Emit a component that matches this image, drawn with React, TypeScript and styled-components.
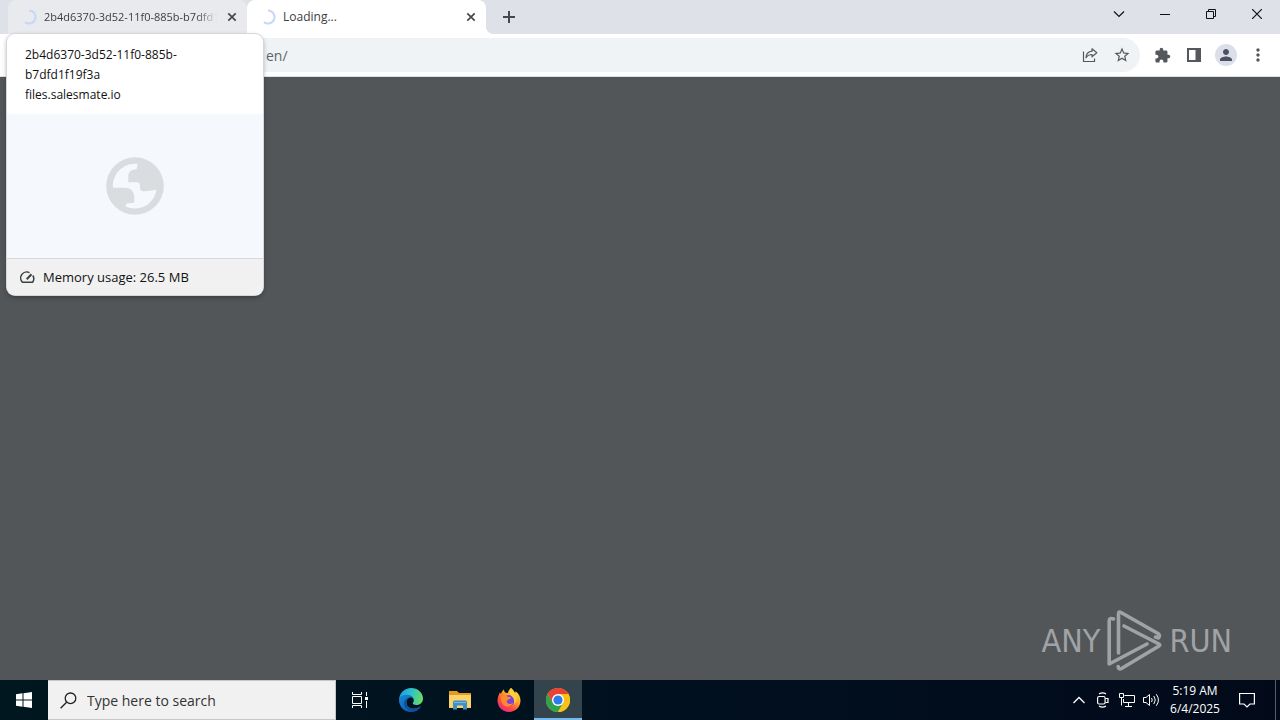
import React from "react";
import styled, { createGlobalStyle } from "styled-components";
import { MdExtension, MdStarBorder, MdPerson, MdMoreVert } from "react-icons/md";

const GlobalStyle = createGlobalStyle`
  * { box-sizing: border-box; }
  body { margin: 0; font-family: "Open Sans", "Noto Sans", sans-serif; font-size: 12px; color: #202124; }
  button { font: inherit; color: inherit; border: 0; padding: 0; background: none; }
`;

const Desktop = styled.div`
  position: relative;
  display: flex;
  flex-direction: column;
  min-height: 100vh;
  background: #525659;
`;

const TabStrip = styled.header`
  display: flex;
  height: 34px;
  padding-left: 8px;
  background: #dee1e8;
`;

const TabItem = styled.div<{ $active?: boolean }>`
  position: relative;
  display: flex;
  align-items: center;
  width: 239px;
  padding: 0 7px 0 13px;
  gap: 7px;
  border-radius: 8px 8px 0 0;
  background: ${(p) => (p.$active ? "#ffffff" : "#e8eaed")};
  &::after {
    content: "";
    display: ${(p) => (p.$active ? "block" : "none")};
    position: absolute;
    left: 100%;
    bottom: 0;
    width: 8px;
    height: 8px;
    background: radial-gradient(circle at 100% 0, transparent 8px, #ffffff 8px);
  }
`;

const TabTitle = styled.span<{ $fade?: boolean }>`
  flex: 1;
  min-width: 0;
  overflow: hidden;
  white-space: nowrap;
  line-height: 16px;
  font-size: ${(p) => (p.$fade ? 11 : 12)}px;
  color: #3c4043;
  mask-image: ${(p) => (p.$fade ? "linear-gradient(to right, #000 88%, transparent)" : "none")};
`;

const IconButton = styled.button<{ $size?: number }>`
  display: grid;
  place-items: center;
  flex: none;
  width: ${(p) => p.$size ?? 16}px;
  height: ${(p) => p.$size ?? 16}px;
  color: #45494d;
`;

const NewTab = styled(IconButton)`
  align-self: center;
  margin-left: 9px;
`;

const WindowControls = styled.div`
  display: flex;
  margin-left: auto;
`;

const WindowButton = styled.button`
  display: grid;
  place-items: center;
  width: 46px;
  height: 28px;
  color: #111111;
`;

const Toolbar = styled.div`
  display: flex;
  align-items: center;
  height: 43px;
  padding: 0 6px 0 112px;
  gap: 6px;
  background: #ffffff;
  border-bottom: 1px solid #dfe1e3;
`;

const AddressBar = styled.form`
  display: flex;
  align-items: center;
  flex: 1;
  height: 34px;
  padding: 0 2px 0 154px;
  border-radius: 17px;
  background: #f0f3f5;
`;

const AddressInput = styled.input`
  flex: 1;
  min-width: 0;
  padding: 0;
  border: 0;
  background: none;
  outline: none;
  font: 14px "Open Sans", "Noto Sans", sans-serif;
  color: #5f6368;
`;

const ToolButton = styled(IconButton)`
  width: 32px;
  height: 32px;
  color: #54585d;
`;

const ToolGroup = styled.nav`
  display: flex;
`;

const Avatar = styled.span`
  display: grid;
  place-items: center;
  width: 22px;
  height: 22px;
  border-radius: 50%;
  background: #dcdfe9;
  color: #4c5265;
`;

const Page = styled.main`
  display: flex;
  flex: 1;
  align-items: flex-end;
  justify-content: flex-end;
  padding: 0 48px 8px;
`;

const Watermark = styled.div`
  display: flex;
  align-items: center;
  gap: 7px;
  height: 62px;
  color: #a0a3a5;
  font: 32px "DejaVu Sans Condensed", sans-serif;
`;

const HoverCard = styled.section`
  position: absolute;
  top: 34px;
  left: 7px;
  width: 256px;
  overflow: hidden;
  border-radius: 8px;
  background: #ffffff;
  box-shadow: 0 0 0 1px #d5d7da, 0 2px 5px rgba(0, 0, 0, 0.35);
  color: #111111;
`;

const CardText = styled.div`
  height: 80px;
  padding: 11px 18px 0;
  line-height: 20px;
  p { margin: 0; }
`;

const CardPreview = styled.div`
  display: grid;
  place-items: center;
  height: 144px;
  background: #f5f9fd;
`;

const CardFooter = styled.footer`
  display: flex;
  align-items: center;
  gap: 8px;
  height: 37px;
  padding-left: 13px;
  border-top: 1px solid #d6d9dc;
  background: #f1f1f1;
  font-size: 13px;
`;

const Taskbar = styled.footer`
  display: flex;
  height: 40px;
  background: linear-gradient(to right, #00171f, #010f1e 60%, #020a1a);
  color: #ffffff;
`;

const TaskButton = styled.button<{ $active?: boolean }>`
  display: grid;
  place-items: center;
  width: 48px;
  height: 40px;
  background: ${(p) => (p.$active ? "#34444d" : "none")};
  box-shadow: ${(p) => (p.$active ? "inset 0 -2px #76b9ed" : "none")};
`;

const SearchBox = styled.label`
  display: flex;
  align-items: center;
  gap: 10px;
  width: 288px;
  padding-left: 12px;
  border: 1px solid #c4c6c7;
  border-left-width: 0;
  background: #f1f1f1;
  color: #222222;
`;

const SearchInput = styled.input`
  flex: 1;
  min-width: 0;
  padding: 0;
  border: 0;
  outline: none;
  background: none;
  font: 14px "Open Sans", "Noto Sans", sans-serif;
  &::placeholder { color: #333333; opacity: 1; }
`;

const Pinned = styled.div`
  display: flex;
  gap: 1px;
  margin-left: 3px;
`;

const Tray = styled.div`
  display: flex;
  margin-left: auto;
`;

const TrayButton = styled(TaskButton)`
  width: 24px;
`;

const NotificationButton = styled(TaskButton)`
  width: 40px;
  margin-right: 8px;
`;

const Clock = styled.time`
  width: 64px;
  padding-top: 2px;
  text-align: center;
  line-height: 18px;
`;

const ShowDesktop = styled.button`
  width: 5px;
  border-left: 1px solid #56606a;
`;

const Spinner = () => (
  <svg width="16" height="16" viewBox="0 0 16 16" fill="none">
    <path d="M8 1.500a6.500 6.500 0 1 1-4 11.600" stroke="#c9d5fb" strokeWidth="2" />
  </svg>
);

const Cross = () => (
  <svg width="10" height="10" viewBox="0 0 10 10" fill="none" stroke="currentColor" strokeWidth="1.700">
    <path d="M1.300 1.300l7.400 7.400M8.700 1.300L1.300 8.700" />
  </svg>
);

const Globe = () => (
  <svg width="58" height="58" viewBox="0 0 58 58">
    <circle cx="29" cy="29" r="28.800" fill="#dadde0" />
    <path
      fill="#f5f9fd"
      d="M31.500 6.800L30.700 12.300C27 12.500 25.500 13 24 14.700C22.600 16 22.300 17 22.300 19V25.300H30.500C33 25.300 34 26.500 34 28.500V31.500C34 33.500 36 34.300 39 34.300C43 34.200 46 33.500 50.500 32.800C48.500 44 40 51.500 29 51.500C25.500 51.500 22.500 50.700 19.500 49.300L20.500 46.500L28.300 45.700V39.700C28.300 34 24 30.700 18.300 30.700H7C6 17 17 5.500 31.500 6.800z"
    />
  </svg>
);

const RunMark = () => (
  <svg width="55" height="62" viewBox="0 0 55 62" fill="none" stroke="currentColor" strokeWidth="3.600" strokeLinejoin="round" strokeLinecap="round">
    <path d="M11.500 43V4q0-3 2.500-1.500L51 23.500q2.500 2 .5 4.500l-3-1" />
    <path d="M6.500 9Q2.200 7.500 2.200 11v43L40 34" />
    <path d="M17 16l35 18q1.500 1 0 2L14.500 58.500q-3 1.500-3.300-2" />
  </svg>
);

const EdgeLogo = () => (
  <svg width="24" height="24" viewBox="0 0 24 24">
    <defs>
      <linearGradient id="edgeTop" x1="0" y1=".3" x2="1" y2=".5">
        <stop offset="0" stopColor="#1b9de2" />
        <stop offset=".5" stopColor="#2fc3c8" />
        <stop offset="1" stopColor="#6bdb62" />
      </linearGradient>
      <linearGradient id="edgeLow" x1="0" y1="0" x2="1" y2="1">
        <stop offset="0" stopColor="#1787d8" />
        <stop offset="1" stopColor="#0b4fa0" />
      </linearGradient>
    </defs>
    <path fill="url(#edgeTop)" d="M0 11.500C.5 5 5.500 0 12 0c7 0 12 5 12 10.500 0 4-3 6.500-6.500 6.500-2.500 0-3.700-.8-3.700-1.700 0-.6 1-1.200 1-2.800C14.800 9.500 12 7.500 8.500 7.500 4 7.500 1 9.500 0 11.500z" />
    <path fill="url(#edgeLow)" d="M0 12c0-3 3.500-5.200 7.500-5.200 4.500 0 7.300 2.500 7.300 5.400 0-1.700-1.500-2.700-3-2.700C9 9.500 7.500 12 7.500 14.500c0 4 3.500 6 7.500 6 3 0 5-1 7-2.200C20 22 16.500 24 12 24 5 24 0 18.500 0 12z" />
    <path fill="#124f96" d="M9.500 9.800C8 11 7.500 12.800 7.500 14.500c0 4 3.500 6 7.500 6 3 0 5-1 7-2.200-1 2-3 3.800-5.500 4.900C10.500 24 5 20.500 5 15.500c0-3 2-5.200 4.500-5.700z" />
  </svg>
);

const FolderLogo = () => (
  <svg width="22" height="20" viewBox="0 0 22 20">
    <path fill="#e59a20" d="M0 1h8l2 2h12v5H0z" />
    <path fill="#fbd367" d="M0 5h22v13H0z" />
    <path fill="#3c8fc9" d="M4 19.500V12q0-1.500 1.500-1.500h11q1.500 0 1.500 1.500v7.500h-4V15.500H8v4z" />
    <path fill="#6fb9e6" d="M5 12h12v1H5z" />
  </svg>
);

const FirefoxLogo = () => (
  <svg width="24" height="24" viewBox="0 0 24 24">
    <defs>
      <linearGradient id="fox" x1=".9" y1="0" x2=".2" y2="1">
        <stop offset="0" stopColor="#fff04a" />
        <stop offset=".4" stopColor="#ffa52a" />
        <stop offset=".7" stopColor="#ff4b42" />
        <stop offset="1" stopColor="#e6228f" />
      </linearGradient>
    </defs>
    <path fill="url(#fox)" d="M14 0c2 1.500 3.200 3.500 3.800 5.200.6-.5.800-1.200.8-2C22 5.500 23.500 9 23.500 12.500 23.500 19 18.500 24 12 24S.5 19 .5 12.500C.5 9 2 6.500 3 4c.3 1 .5 1.500 1 2 .5-2 1.500-3.500 3-4.500 0 1.500.6 2.500 1.700 3.300L11 5c.2-2 1.500-4 3-5z" />
    <circle cx="12" cy="12.500" r="5.500" fill="#7a43db" />
    <path fill="#ff8a2a" d="M4 9c2-2 4.500-2 6.500-.5 1.500.8 3 .2 3.500 1.200-1 1.800-3.500 1.300-4.200 3.300C9.500 16 13 17 16 15c-1.500 3.800-7 5-10 1.500C4.500 14.500 3.500 11.500 4 9z" />
    <path fill="#ffcf3a" d="M14 0c2.500 2.500 5 5 5.500 10 .2 3-1 5-2.500 6.500 1-4-.5-7-2.500-8.500C12 6 12 2.500 14 0z" />
  </svg>
);

const ChromeLogo = () => (
  <svg width="24" height="24" viewBox="0 0 24 24">
    <circle cx="12" cy="12" r="12" fill="#fbc116" />
    <path fill="#e94235" d="M1.600 6A12 12 0 0 1 22.400 6H12v6l-5.200 3z" />
    <path fill="#2fa14f" d="M1.600 6A12 12 0 0 0 12 24l5.200-9L12 12l-5.200 3z" />
    <path fill="#fbc116" d="M22.400 6A12 12 0 0 1 12 24l5.200-9A6 6 0 0 0 12 6z" />
    <circle cx="12" cy="12" r="6" fill="#ffffff" />
    <circle cx="12" cy="12" r="4.600" fill="#2a7de9" />
  </svg>
);

export default function App() {
  return (
    <Desktop>
      <GlobalStyle />
      <TabStrip>
        <TabItem>
          <Spinner />
          <TabTitle $fade>2b4d6370-3d52-11f0-885b-b7dfd1f19f3a</TabTitle>
          <IconButton aria-label="Close tab"><Cross /></IconButton>
        </TabItem>
        <TabItem $active>
          <Spinner />
          <TabTitle>Loading...</TabTitle>
          <IconButton aria-label="Close tab"><Cross /></IconButton>
        </TabItem>
        <NewTab $size={28} aria-label="New tab">
          <svg width="12" height="12" viewBox="0 0 12 12" stroke="currentColor" strokeWidth="2"><path d="M6 0v12M0 6h12" /></svg>
        </NewTab>
        <WindowControls>
          <WindowButton aria-label="Search tabs">
            <svg width="12" height="8" viewBox="0 0 12 8" fill="none" stroke="currentColor" strokeWidth="1.200"><path d="M1 1.500l5 5 5-5" /></svg>
          </WindowButton>
          <WindowButton aria-label="Minimize">
            <svg width="10" height="10" viewBox="0 0 10 10" stroke="currentColor"><path d="M0 5.500h10" /></svg>
          </WindowButton>
          <WindowButton aria-label="Restore">
            <svg width="10" height="10" viewBox="0 0 10 10" fill="none" stroke="currentColor"><path d="M.5 2.500h7v7h-7zM2.500 2.500v-2h7v7h-2" /></svg>
          </WindowButton>
          <WindowButton aria-label="Close">
            <svg width="10" height="10" viewBox="0 0 10 10" stroke="currentColor" strokeWidth="1.200"><path d="M0 0l10 10M10 0L0 10" /></svg>
          </WindowButton>
        </WindowControls>
      </TabStrip>

      <Toolbar>
        <AddressBar>
          <AddressInput aria-label="Address" defaultValue="en/" />
          <ToolButton type="button" aria-label="Share">
            <svg width="16" height="16" viewBox="0 0 16 16" fill="none" stroke="currentColor" strokeWidth="1.200">
              <path d="M1.500 4.500v10h11v-3" />
              <path d="M10 1.800l4.800 4-4.800 4V7.500c-3 0-4.700 1-6 3.300.3-3.800 2.300-6.200 6-6.600z" strokeLinejoin="round" />
            </svg>
          </ToolButton>
          <ToolButton type="button" aria-label="Bookmark"><MdStarBorder size={18} /></ToolButton>
        </AddressBar>
        <ToolGroup>
          <ToolButton aria-label="Extensions"><MdExtension size={17} /></ToolButton>
          <ToolButton aria-label="Side panel">
            <svg width="14" height="14" viewBox="0 0 14 14" fill="currentColor"><path fillRule="evenodd" d="M0 0h14v14H0zM2 2v10h6.500V2z" /></svg>
          </ToolButton>
          <ToolButton aria-label="Profile"><Avatar><MdPerson size={18} /></Avatar></ToolButton>
          <ToolButton aria-label="Menu"><MdMoreVert size={20} /></ToolButton>
        </ToolGroup>
      </Toolbar>

      <Page>
        <Watermark>
          <span>ANY</span>
          <RunMark />
          <span>RUN</span>
        </Watermark>
      </Page>

      <Taskbar>
        <TaskButton aria-label="Start">
          <svg width="16" height="16" viewBox="0 0 16 16" fill="#ffffff"><path d="M0 2.200L6.500 1.300V7.500H0zM7.500 1.200L16 0v7.500H7.500zM0 8.500h6.500v6.200L0 13.800zM7.500 8.500H16V16l-8.500-1.200z" /></svg>
        </TaskButton>
        <SearchBox>
          <svg width="17" height="17" viewBox="0 0 17 17" fill="none" stroke="currentColor" strokeWidth="1.300"><circle cx="10.500" cy="6.300" r="5.300" /><path d="M6.600 10.200L.6 16.200" /></svg>
          <SearchInput aria-label="Search" placeholder="Type here to search" />
        </SearchBox>
        <TaskButton aria-label="Task view">
          <svg width="18" height="16" viewBox="0 0 18 16" fill="none" stroke="currentColor"><path d="M1.500 0v2.500h9V0M1.500 16v-2.500h9V16M1.500 4.500h9v7h-9zM15.500 0v4M15.500 9v7" /><path fill="currentColor" stroke="none" d="M14 5h3v3h-3z" /></svg>
        </TaskButton>
        <Pinned>
          <TaskButton aria-label="Edge"><EdgeLogo /></TaskButton>
          <TaskButton aria-label="File Explorer"><FolderLogo /></TaskButton>
          <TaskButton aria-label="Firefox"><FirefoxLogo /></TaskButton>
          <TaskButton $active aria-label="Chrome"><ChromeLogo /></TaskButton>
        </Pinned>
        <Tray>
          <TrayButton aria-label="Hidden icons">
            <svg width="12" height="8" viewBox="0 0 12 8" fill="none" stroke="currentColor" strokeWidth="1.300"><path d="M.5 7L6 1.500 11.500 7" /></svg>
          </TrayButton>
          <TrayButton aria-label="Camera">
            <svg width="12" height="16" viewBox="0 0 12 16" fill="none" stroke="currentColor" strokeWidth="1.200"><rect x=".6" y="4.500" width="7.500" height="7.500" rx="1.500" /><path d="M8.500 6.500h2.500v4H8.500M2 2q3.500-2.200 7 0M2 14q3.500 2.200 7 0" /></svg>
          </TrayButton>
          <TrayButton aria-label="Network">
            <svg width="16" height="14" viewBox="0 0 16 14" fill="none" stroke="currentColor"><path d="M5.500 2.500h10v7h-11V6M9.500 9.500v4M6 13.500h7M.5.5h4v4h-4zM2.500 4.500v8" /></svg>
          </TrayButton>
          <TrayButton aria-label="Volume">
            <svg width="17" height="14" viewBox="0 0 17 14" fill="none" stroke="currentColor"><path d="M.5 4.500H3l3.500-3v11l-3.500-3H.5zM8.500 5q1.500 2 0 4M10.800 3q3 4 0 8M13.200 1.200q4.500 5.800 0 11.600" /></svg>
          </TrayButton>
          <Clock dateTime="2025-06-04T05:19">5:19 AM<br />6/4/2025</Clock>
          <NotificationButton aria-label="Notifications">
            <svg width="16" height="16" viewBox="0 0 16 16" fill="none" stroke="currentColor" strokeWidth="1.200"><path d="M.6 1.500h14.800v10.500H11L8 15l-3-3H.6z" /></svg>
          </NotificationButton>
          <ShowDesktop aria-label="Show desktop" />
        </Tray>
      </Taskbar>

      <HoverCard>
        <CardText>
          <p>2b4d6370-3d52-11f0-885b-<wbr />b7dfd1f19f3a</p>
          <p>files.salesmate.io</p>
        </CardText>
        <CardPreview><Globe /></CardPreview>
        <CardFooter>
          <svg width="15" height="13" viewBox="0 0 15 13" fill="none" stroke="#3c4043" strokeWidth="1.500">
            <path d="M9.500 1.700A6 6 0 0 0 2.400 11.200H12.600A6 6 0 0 0 12.800 4.500" />
            <path d="M6.700 8.200L11.500 3.200" strokeWidth="2" />
          </svg>
          <span>Memory usage: 26.5 MB</span>
        </CardFooter>
      </HoverCard>
    </Desktop>
  );
}
